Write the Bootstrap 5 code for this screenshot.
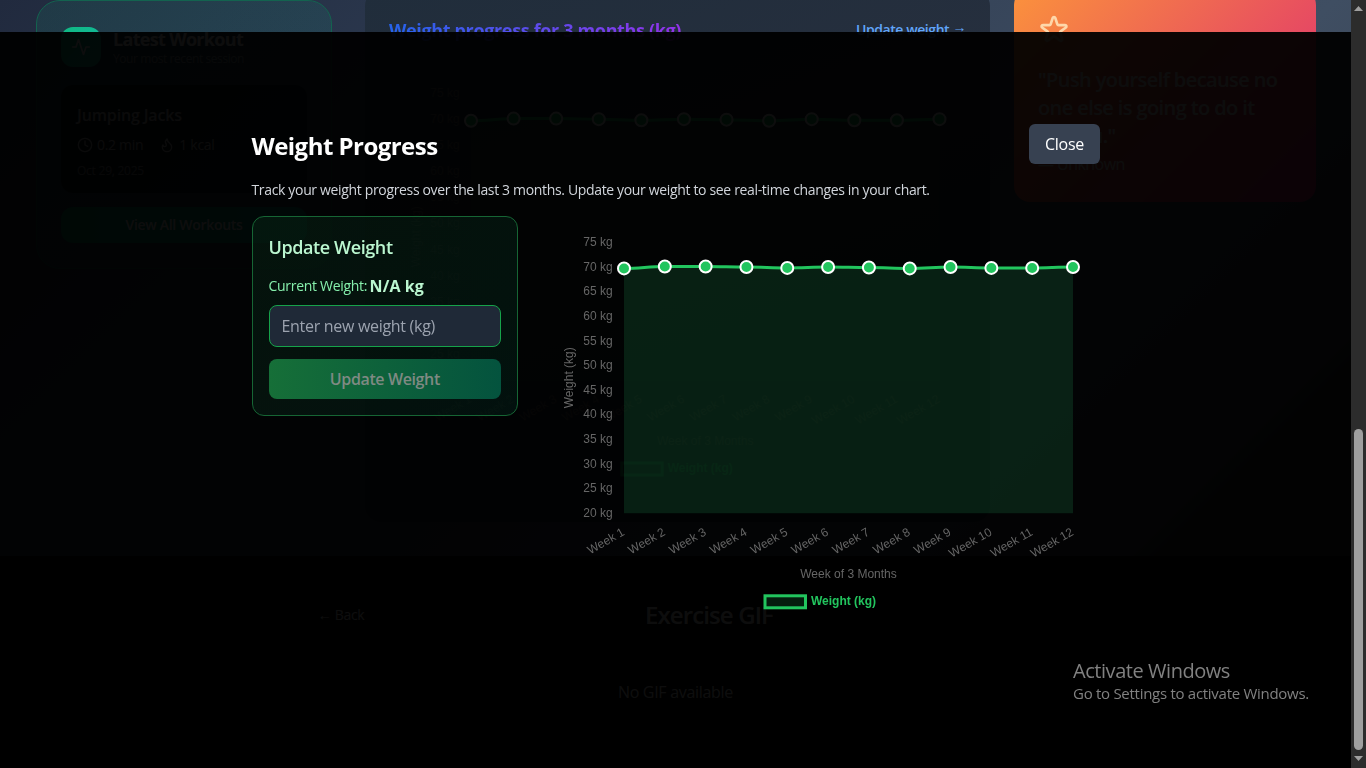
<!DOCTYPE html>
<html lang="en">
<head>
<meta charset="utf-8">
<meta name="viewport" content="width=device-width, initial-scale=1">
<title>Weight Progress</title>
<link rel="stylesheet" href="https://cdn.jsdelivr.net/npm/bootstrap@5.3.0/dist/css/bootstrap.min.css">
<style>
  body { font-family: "Open Sans", "Noto Sans", sans-serif; background: #000; color: #fff; height: 768px; letter-spacing: -.3px; }
  svg { display: block; overflow: visible; }
  .page { width: 1351px; height: 768px; }
  .dash { height: 556px; padding: 0 35px 0 36px; overflow: hidden;
    background: linear-gradient(135deg, #212a3e 0%, #2b384e 25%, #3f4e62 70%, #3a4454 88%, #303030 90%, #303030 100%); }
  .t12 { font-size: 12px; line-height: 16px; }
  .t14 { font-size: 14px; line-height: 20px; }
  .t16 { font-size: 16px; line-height: 24px; }
  .t18 { font-size: 18px; line-height: 28px; }
  .t20 { font-size: 20px; line-height: 28px; }
  .t24 { font-size: 24px; line-height: 32px; }

  .workout { width: 296px; height: 269px; padding: 26px 24px; border: 1px solid #13634f; border-radius: 24px;
    background: linear-gradient(135deg, rgba(16,185,129,.1), rgba(20,184,166,.1)); }
  .pulse { width: 40px; height: 40px; border-radius: 12px; background: linear-gradient(135deg, #10b981, #14b8a6); }
  .session { height: 108px; margin-top: 18px; padding: 18px 16px; border-radius: 12px; background: rgba(0,0,0,.55); color: #c4c4c4; }
  .viewall { height: 36px; margin-top: 14px; border-radius: 12px; background: linear-gradient(90deg, #059669, #0d9488); }

  .trend { width: 625px; height: 532px; margin-top: -10px; padding: 26px 24px 0; border-radius: 16px; background: linear-gradient(160deg, #202d3b, #262f3e 40%, #222d3b 70%); }
  .trend-title { background: linear-gradient(90deg, #2563eb, #9333ea); -webkit-background-clip: text; background-clip: text; color: transparent; letter-spacing: -.35px; }
  .trend-link { color: #60a5fa; letter-spacing: -.43px; }
  .trend-link span { vertical-align: 3px; line-height: 1; }
  .quote { width: 302px; height: 213px; margin-top: -11px; padding: 25px 24px; border-radius: 16px; background: linear-gradient(135deg, #fb923c, #e8505f 60%, #db2777); }
  .quote .who { font-size: 16px; line-height: 20px; letter-spacing: -.55px; }

  .gif { width: 736px; margin: 0 auto; padding-top: 41px; }
  .backbtn { width: 67px; height: 35px; border-radius: 8px; background: #0c0c0c; }

  .veil { left: 0; top: 32px; width: 1351px; height: 736px; background: rgba(0,0,0,.95); padding-top: 92px; }
  .sheet { width: 848px; margin: 0 auto; }
  .sheet h2 { letter-spacing: -.53px; }
  .closebtn { width: 71px; height: 40px; border-radius: 6px; background: #374151; letter-spacing: -.27px; padding: 0 0 0 1px; }
  .lede { color: #d1d5db; letter-spacing: -.34px; margin: 16px 0 16px; }
  .sheet .row { --bs-gutter-x: 24px; }
  .entry { height: 200px; padding: 16px; border: 1px solid #166534; border-radius: 12px;
    background: linear-gradient(135deg, rgba(20,83,45,.2), rgba(6,78,59,.2)); }
  .entry h3 { color: #bbf7d0; letter-spacing: -.4px; }
  .now { color: #86efac; margin-top: 14px; margin-bottom: 8px; height: 22px; }
  .now b { color: #bbf7d0; font-size: 16px; letter-spacing: .1px; margin-left: 2.5px; }
  .entry .form-control { height: 42px; padding: 0 12px; border: 1px solid #16a34a; border-radius: 8px; background: #1f2937; letter-spacing: -.3px; }
  .entry .form-control::placeholder { color: #9ca3af; opacity: 1; }
  .entry .btn { height: 40px; margin-top: 12px; padding: 0; border: 0; border-radius: 8px; color: #7f8a83; letter-spacing: -.38px; opacity: 1;
    background: linear-gradient(90deg, #166f38, #04533e); }

  .notice { right: 57px; bottom: 65px; width: 236px; color: #818181; }
  .notice .go { font-size: 15px; line-height: 20px; letter-spacing: -.28px; white-space: nowrap; }
  .notice .act { letter-spacing: -.45px; line-height: 25px; }
  .rail { width: 15px; height: 768px; background: #2c2c2c; padding: 6px 0 7px; }
  .thumb { width: 9px; height: 321px; border-radius: 5px; background: #9f9f9f; margin: auto 0 6px; }
  .plot text { font-family: "Liberation Sans", Arial, sans-serif; font-size: 12px; letter-spacing: 0; fill: #666; }
  .plot .key { font-weight: 700; fill: #22c55e; }
</style>
</head>
<body class="d-flex overflow-hidden">
<main class="page flex-shrink-0">
  <section class="dash d-flex align-items-start">
    <div class="workout flex-shrink-0">
      <div class="d-flex align-items-center">
        <div class="pulse d-flex align-items-center justify-content-center">
          <svg width="20" height="20" viewBox="0 0 24 24" fill="none" stroke="#fff" stroke-width="2" stroke-linecap="round" stroke-linejoin="round"><path d="M22 12h-4l-3 9L9 3l-3 9H2"/></svg>
        </div>
        <div class="ms-2 ps-1">
          <div class="t18 fw-bold" style="letter-spacing:-.68px;line-height:24px">Latest Workout</div>
          <div class="t12 text-white-50" style="letter-spacing:-.42px">Your most recent session</div>
        </div>
      </div>
      <div class="session">
        <div class="t16 fw-semibold" style="letter-spacing:-.14px">Jumping Jacks</div>
        <div class="d-flex t14 mt-2 gap-3">
          <span class="d-flex align-items-center gap-1"><svg width="16" height="16" viewBox="0 0 24 24" fill="none" stroke="currentColor" stroke-width="2" stroke-linecap="round" stroke-linejoin="round"><circle cx="12" cy="12" r="10"/><path d="M12 6v6l4 2"/></svg>0.2 min</span>
          <span class="d-flex align-items-center gap-1"><svg width="16" height="16" viewBox="0 0 24 24" fill="none" stroke="currentColor" stroke-width="2" stroke-linecap="round" stroke-linejoin="round"><path d="M8.5 14.5A2.5 2.5 0 0 0 11 12c0-1.38-.5-2-1-3-1.072-2.143-.224-4.054 2-6 .5 2.5 2 4.9 4 6.5 2 1.6 3 3.5 3 5.5a7 7 0 1 1-14 0c0-1.153.433-2.294 1-3a2.5 2.5 0 0 0 2.5 2.5z"/></svg>1 kcal</span>
        </div>
        <div class="t12 mt-2 text-white-50" style="letter-spacing:-.24px">Oct 29, 2025</div>
      </div>
      <div class="viewall t14 fw-semibold d-flex align-items-center justify-content-center">View All Workouts</div>
    </div>
    <div class="trend flex-shrink-0 ms-auto">
      <div class="d-flex justify-content-between align-items-center">
        <div class="t18 fw-bold trend-title">Weight progress for 3 months (kg)</div>
        <div class="t14 fw-semibold trend-link">Update weight <span>→</span></div>
      </div>
      <svg class="plot" id="trendPlot" width="577" height="440"></svg>
    </div>
    <div class="quote flex-shrink-0 ms-4">
      <svg width="32" height="32" viewBox="0 0 24 24" fill="none" stroke="#fed7aa" stroke-width="2" stroke-linecap="round" stroke-linejoin="round"><path d="M11.049 2.927c.3-.921 1.603-.921 1.902 0l1.519 4.674a1 1 0 00.95.69h4.915c.969 0 1.371 1.24.588 1.81l-3.976 2.888a1 1 0 00-.363 1.118l1.518 4.674c.3.922-.755 1.688-1.538 1.118l-3.976-2.888a1 1 0 00-1.176 0l-3.976 2.888c-.783.57-1.838-.197-1.538-1.118l1.518-4.674a1 1 0 00-.363-1.118l-3.976-2.888c-.784-.57-.38-1.81.588-1.81h4.914a1 1 0 00.951-.69l1.519-4.674z"/></svg>
      <div class="t20 fw-semibold mt-3 pt-1" style="letter-spacing:-.6px">"Push yourself because no<br>one else is going to do it<br>for you."</div>
      <div class="who mt-1">— Unknown</div>
    </div>
  </section>
  <section class="gif">
    <div class="d-flex justify-content-between align-items-center">
      <div class="backbtn t14 d-flex align-items-center justify-content-center">← Back</div>
      <div class="t24 fw-semibold" style="letter-spacing:-.89px">Exercise GIF</div>
      <div></div>
    </div>
    <div class="t16 text-center mt-5">No GIF available</div>
  </section>
</main>

<aside class="rail d-flex flex-column align-items-center flex-shrink-0">
  <svg width="9" height="5"><path d="M0 5L4.500 0L9 5z" fill="#9f9f9f"/></svg>
  <div class="thumb"></div>
  <svg width="9" height="5"><path d="M0 0L4.500 5L9 0z" fill="#9f9f9f"/></svg>
</aside>

<div class="veil position-fixed">
  <div class="sheet">
    <div class="d-flex justify-content-between align-items-center">
      <h2 class="t24 fw-bold m-0" style="padding-top:3px">Weight Progress</h2>
      <button type="button" class="closebtn border-0 text-white t16">Close</button>
    </div>
    <p class="lede t14">Track your weight progress over the last 3 months. Update your weight to see real-time changes in your chart.</p>
    <div class="row">
      <div class="col-4">
        <div class="entry">
          <h3 class="t18 fw-semibold m-0">Update Weight</h3>
          <div class="now t14 d-flex align-items-center"><span>Current Weight:</span><b>N/A kg</b></div>
          <input class="form-control t16" placeholder="Enter new weight (kg)">
          <button type="button" class="btn w-100 t16 fw-semibold" disabled>Update Weight</button>
        </div>
      </div>
      <div class="col-8"><svg class="plot" id="mainPlot" width="558" height="400"></svg></div>
    </div>
  </div>
</div>
<div class="notice position-fixed">
  <div class="act t20">Activate Windows</div>
  <div class="go">Go to Settings to activate Windows.</div>
</div>

<script src="https://cdn.jsdelivr.net/npm/bootstrap@5.3.0/dist/js/bootstrap.bundle.min.js"></script>
<script>
  const weights = [69.7, 70.1, 70.1, 70, 69.8, 70, 69.9, 69.7, 70, 69.8, 69.8, 70];
  // Area chart of weekly weights: o gives plot edges inside the svg
  function draw(id, o) {
    const step = (o.right - o.left) / 11;
    const x = i => o.left + i * step, y = v => o.bottom - (v - 20) / 55 * (o.bottom - o.top);
    const p = weights.map((v, i) => [x(i), y(v)]);
    let line = `M${p[0]}`;
    for (let i = 1; i < p.length; i++) {
      const h = step * .4;
      line += `C${p[i-1][0] + h} ${p[i-1][1]} ${p[i][0] - h} ${p[i][1]} ${p[i]}`;
    }
    let s = `<path d="${line}V${o.bottom}H${o.left}Z" fill="rgba(46,190,108,.155)"/><path d="${line}" fill="none" stroke="#22c55e" stroke-width="3"/>`;
    p.forEach(([a, b]) => s += `<circle cx="${a}" cy="${b}" r="6" fill="#22c55e" stroke="#fff" stroke-width="2"/>`);
    for (let v = 20; v <= 75; v += 5) s += `<text x="${o.left - 11.300}" y="${y(v) + 3.700}" text-anchor="end">${v} kg</text>`;
    p.forEach(([a], i) => s += `<text text-anchor="end" transform="translate(${a + 1.300} ${o.bottom + 21}) rotate(-30)">Week ${i + 1}</text>`);
    const mid = (o.left + o.right) / 2;
    s += `<text text-anchor="middle" transform="translate(${o.left - 51} ${(o.top + o.bottom) / 2}) rotate(-90)">Weight (kg)</text>`;
    s += `<text x="${mid}" y="${o.bottom + 64.500}" text-anchor="middle">Week of 3 Months</text>`;
    s += `<rect x="${mid - 83.500}" y="${o.bottom + 82.500}" width="40.500" height="12" fill="rgba(34,197,94,.15)" stroke="#22c55e" stroke-width="3"/>`;
    s += `<text class="key" x="${mid - 37.500}" y="${o.bottom + 91.500}">Weight (kg)</text>`;
    document.getElementById(id).innerHTML = s;
  }
  draw('mainPlot', { left: 82, right: 531, top: 26.3, bottom: 297.3 });
  draw('trendPlot', { left: 82, right: 550.5, top: 49, bottom: 336.5 });
</script>
</body>
</html>
